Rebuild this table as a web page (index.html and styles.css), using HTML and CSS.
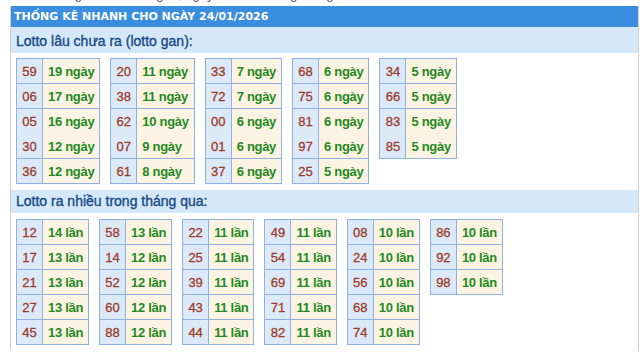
FILE: index.html
```html
<!DOCTYPE html>
<html lang="vi">
<head>
<meta charset="utf-8">
<title>Thống kê nhanh</title>
<link rel="stylesheet" href="styles.css">
</head>
<body>
<div class="top"><span class="top-text">Thống kê nhanh lô gan, ngày ra nhiều trong tháng 24/01/2026</span></div>
<div class="box">
  <div class="head">THỐNG KÊ NHANH CHO NGÀY 24/01/2026</div>
  <div class="sec-title first">Lotto lâu chưa ra (lotto gan):</div>
  <div class="tables s1">
    <table class="lt">
      <tr><td class="n">59</td><td class="v">19 ngày</td></tr>
      <tr><td class="n">06</td><td class="v">17 ngày</td></tr>
      <tr class="j"><td class="n">05</td><td class="v">16 ngày</td></tr>
      <tr><td class="n">30</td><td class="v">12 ngày</td></tr>
      <tr><td class="n">36</td><td class="v">12 ngày</td></tr>
    </table>
    <table class="lt">
      <tr><td class="n">20</td><td class="v">11 ngày</td></tr>
      <tr><td class="n">38</td><td class="v">11 ngày</td></tr>
      <tr class="j"><td class="n">62</td><td class="v">10 ngày</td></tr>
      <tr><td class="n">07</td><td class="v">9 ngày</td></tr>
      <tr><td class="n">61</td><td class="v">8 ngày</td></tr>
    </table>
    <table class="lt">
      <tr><td class="n">33</td><td class="v">7 ngày</td></tr>
      <tr><td class="n">72</td><td class="v">7 ngày</td></tr>
      <tr class="j"><td class="n">00</td><td class="v">6 ngày</td></tr>
      <tr><td class="n">01</td><td class="v">6 ngày</td></tr>
      <tr><td class="n">37</td><td class="v">6 ngày</td></tr>
    </table>
    <table class="lt">
      <tr><td class="n">68</td><td class="v">6 ngày</td></tr>
      <tr><td class="n">75</td><td class="v">6 ngày</td></tr>
      <tr class="j"><td class="n">81</td><td class="v">6 ngày</td></tr>
      <tr><td class="n">97</td><td class="v">6 ngày</td></tr>
      <tr><td class="n">25</td><td class="v">5 ngày</td></tr>
    </table>
    <table class="lt">
      <tr><td class="n">34</td><td class="v">5 ngày</td></tr>
      <tr><td class="n">66</td><td class="v">5 ngày</td></tr>
      <tr class="j"><td class="n">83</td><td class="v">5 ngày</td></tr>
      <tr><td class="n">85</td><td class="v">5 ngày</td></tr>
    </table>
  </div>
  <div class="sec-title">Lotto ra nhiều trong tháng qua:</div>
  <div class="tables s2">
    <table class="lt">
      <tr><td class="n">12</td><td class="v">14 lần</td></tr>
      <tr><td class="n">17</td><td class="v">13 lần</td></tr>
      <tr><td class="n">21</td><td class="v">13 lần</td></tr>
      <tr><td class="n">27</td><td class="v">13 lần</td></tr>
      <tr><td class="n">45</td><td class="v">13 lần</td></tr>
    </table>
    <table class="lt">
      <tr><td class="n">58</td><td class="v">13 lần</td></tr>
      <tr><td class="n">14</td><td class="v">12 lần</td></tr>
      <tr><td class="n">52</td><td class="v">12 lần</td></tr>
      <tr><td class="n">60</td><td class="v">12 lần</td></tr>
      <tr><td class="n">88</td><td class="v">12 lần</td></tr>
    </table>
    <table class="lt">
      <tr><td class="n">22</td><td class="v">11 lần</td></tr>
      <tr><td class="n">25</td><td class="v">11 lần</td></tr>
      <tr><td class="n">39</td><td class="v">11 lần</td></tr>
      <tr><td class="n">43</td><td class="v">11 lần</td></tr>
      <tr><td class="n">44</td><td class="v">11 lần</td></tr>
    </table>
    <table class="lt">
      <tr><td class="n">49</td><td class="v">11 lần</td></tr>
      <tr><td class="n">54</td><td class="v">11 lần</td></tr>
      <tr><td class="n">69</td><td class="v">11 lần</td></tr>
      <tr><td class="n">71</td><td class="v">11 lần</td></tr>
      <tr><td class="n">82</td><td class="v">11 lần</td></tr>
    </table>
    <table class="lt">
      <tr><td class="n">08</td><td class="v">10 lần</td></tr>
      <tr><td class="n">24</td><td class="v">10 lần</td></tr>
      <tr><td class="n">56</td><td class="v">10 lần</td></tr>
      <tr><td class="n">68</td><td class="v">10 lần</td></tr>
      <tr><td class="n">74</td><td class="v">10 lần</td></tr>
    </table>
    <table class="lt">
      <tr><td class="n">86</td><td class="v">10 lần</td></tr>
      <tr><td class="n">92</td><td class="v">10 lần</td></tr>
      <tr><td class="n">98</td><td class="v">10 lần</td></tr>
    </table>
  </div>
</div>
</body>
</html>
```
FILE: styles.css
```css
html, body {
  margin: 0;
  padding: 0;
  background: #ffffff;
}
body {
  font-family: "Liberation Sans", Arial, sans-serif;
  color: #333;
}
.top {
  height: 6px;
  overflow: hidden;
  padding-left: 45px;
}
.top-text {
  display: block;
  font-size: 13px;
  line-height: 16px;
  margin-top: -13px;
  color: #4a5670;
  white-space: nowrap;
}
.box {
  margin-left: 10px;
  width: 627px;
  border-left: 1px solid #cfcfcf;
  border-right: 1px solid #cfcfcf;
}
.head {
  background: #3a8ddf;
  color: #ffffff;
  font-family: "DejaVu Sans", Verdana, sans-serif;
  font-weight: bold;
  font-size: 11px;
  line-height: 21px;
  height: 21px;
  padding-left: 3px;
  white-space: nowrap;
}
.sec-title {
  background: #d5e8fa;
  color: #184a86;
  font-size: 14px;
  line-height: 23px;
  padding-left: 5px;
  -webkit-text-stroke: 0.35px #184a86;
}
.sec-title.first {
  padding-top: 3px;
}
.tables {
  display: flex;
  align-items: flex-start;
  gap: 10px;
  padding: 5px 5px 6px 5px;
}
.tables.s2 {
  padding-top: 6px;
}
.lt {
  border-collapse: separate;
  border-spacing: 0;
  border-top: 1px solid #8fb0e2;
  border-left: 1px solid #8fb0e2;
}
.lt td {
  border-right: 1px solid #8fb0e2;
  border-bottom: 1px solid #8fb0e2;
  height: 24px;
  padding: 0;
  white-space: nowrap;
}
.lt tr.j td {
  border-bottom-color: transparent;
}
.lt td.n {
  background: #dce9f8;
  color: #9e3a27;
  font-size: 13px;
  text-align: center;
  width: 25px;
  -webkit-text-stroke: 0.3px #9e3a27;
}
.lt td.v {
  background: #fdf3e2;
  color: #1f8a1f;
  font-size: 13px;
  font-weight: bold;
  letter-spacing: -0.3px;
  padding: 0 5px 0 5px;
}
```
